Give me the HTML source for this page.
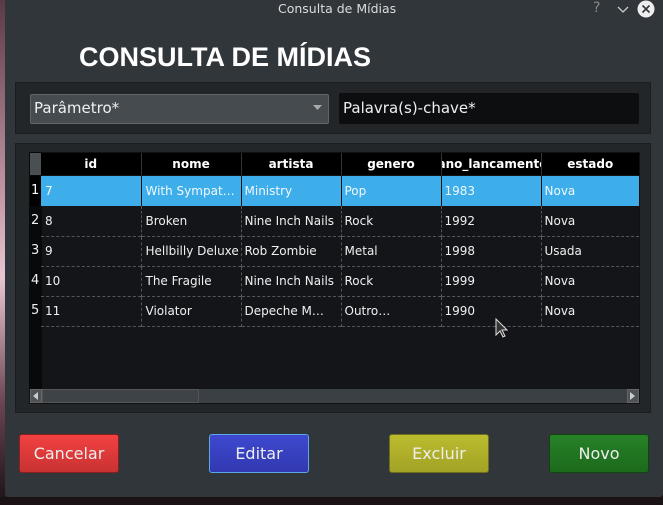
<!DOCTYPE html>
<html><head><meta charset="utf-8"><style>
*{margin:0;padding:0;box-sizing:border-box}
body{width:663px;height:505px;overflow:hidden;background:#1a1214;font-family:"DejaVu Sans","Liberation Sans",sans-serif;position:relative}
.abs{position:absolute}
#bgl{left:0;top:0;width:8px;height:505px;background:linear-gradient(#5a3a44,#c89aa8 40%,#e8c8d0 55%,#6a4450 80%,#1a1214)}
#win{left:5px;top:0;width:658px;height:497px;background:#31363b;border-radius:0 0 3px 3px}
.t{font-size:12px;color:#eff0f1;white-space:nowrap}
.grp{background:#232629;border:1px solid #1b1e20}
th,td{font-size:12px;height:30px;white-space:nowrap;overflow:hidden}
.btn{top:434px;width:100px;height:39px;border-radius:3px;color:#eee;font-size:16px;display:flex;align-items:center;justify-content:center}
</style></head><body>
<div id="bgl" class="abs"></div>
<div id="win" class="abs"></div>
<div class="abs" style="left:0;top:497px;width:663px;height:8px;background:#1a1214"></div>
<div class="abs t" style="left:278px;top:1px;font-size:12.5px;color:#dcdcdc">Consulta de Mídias</div>
<div class="abs" style="left:593px;top:0px;color:#888;font-size:14px">?</div>
<svg class="abs" style="left:617px;top:4px" width="12" height="10"><path d="M1 3l5 5 5-5" stroke="#ccc" fill="none" stroke-width="1.3"/></svg>
<svg class="abs" style="left:637px;top:0px" width="18" height="18"><circle cx="9" cy="9" r="8.5" fill="#eee"/><path d="M5.5 5.5l7 7M12.5 5.5l-7 7" stroke="#31363b" stroke-width="1.6"/></svg>
<div class="abs" style="left:79px;top:42px;font-size:27px;font-weight:bold;color:#fff;font-family:'Liberation Sans',sans-serif">CONSULTA DE MÍDIAS</div>
<div class="abs grp" style="left:15px;top:82px;width:636px;height:52px"></div>
<div class="abs" style="left:30px;top:94px;width:299px;height:30px;background:#464b50;border:1px solid #60656a;border-radius:2px"></div>
<div class="abs t" style="left:34px;top:99px;font-size:15px">Parâmetro*</div>
<svg class="abs" style="left:313px;top:105px" width="9" height="6"><path d="M0 0h9L4.5 5z" fill="#aaa"/></svg>
<div class="abs" style="left:339px;top:93px;width:300px;height:31px;background:#0d0e10;border-radius:2px"></div>
<div class="abs t" style="left:343px;top:99px;font-size:15px">Palavra(s)-chave*</div>
<div class="abs grp" style="left:15px;top:143px;width:636px;height:270px"></div>
<div class="abs" style="left:29px;top:152px;width:611px;height:252px;background:#141518;border:1px solid #111"></div>
<div class="abs" style="left:29px;top:152px;width:13px;height:237px;background:#08090a"></div>
<div class="abs" style="left:30px;top:153px;width:12px;height:22px;background:#4a4f54"></div>
<table class="abs" style="left:41px;top:153px;border-collapse:collapse;table-layout:fixed;width:598px">
<colgroup><col style="width:100px"><col style="width:100px"><col style="width:100px"><col style="width:100px"><col style="width:100px"><col style="width:98px"></colgroup>
<tr style="background:#000;color:#fff"><th style="height:22px;border-right:1px solid #333">id</th><th style="height:22px;border-right:1px solid #333">nome</th><th style="height:22px;border-right:1px solid #333">artista</th><th style="height:22px;border-right:1px solid #333">genero</th><th style="height:22px;border-right:1px solid #333;text-align:left;text-indent:-4px">ano_lancamento</th><th style="height:22px">estado</th></tr>
</table>
<div class="abs" style="left:30px;top:176px;width:11px">
<div class="t" style="height:30px;line-height:30px;font-size:13px;background:#000;color:#fff;padding-left:1px">1</div>
<div class="t" style="height:30px;line-height:30px;font-size:13px;padding-left:1px">2</div>
<div class="t" style="height:30px;line-height:30px;font-size:13px;padding-left:1px">3</div>
<div class="t" style="height:30px;line-height:30px;font-size:13px;padding-left:1px">4</div>
<div class="t" style="height:30px;line-height:30px;font-size:13px;padding-left:1px">5</div>
</div>
<table class="abs" style="left:41px;top:176px;border-collapse:collapse;table-layout:fixed;width:598px;color:#eff0f1">
<colgroup><col style="width:100px"><col style="width:100px"><col style="width:100px"><col style="width:100px"><col style="width:100px"><col style="width:98px"></colgroup>
<tr style="background:#3daee9;color:#f0f8ff"><td style="padding-left:4px;border-right:1px solid #111">7</td><td style="padding-left:4px;border-right:1px solid #111">With Sympat…</td><td style="padding-left:3px;border-right:1px solid #111">Ministry</td><td style="padding-left:3px;border-right:1px solid #111">Pop</td><td style="padding-left:3px;border-right:1px solid #111">1983</td><td style="padding-left:3px">Nova</td></tr>
<tr style="border-bottom:1px dashed #555"><td style="padding-left:4px;border-right:1px dashed #555">8</td><td style="padding-left:4px;border-right:1px dashed #555">Broken</td><td style="padding-left:3px;border-right:1px dashed #555">Nine Inch Nails</td><td style="padding-left:3px;border-right:1px dashed #555">Rock</td><td style="padding-left:3px;border-right:1px dashed #555">1992</td><td style="padding-left:3px">Nova</td></tr>
<tr style="border-bottom:1px dashed #555"><td style="padding-left:4px;border-right:1px dashed #555">9</td><td style="padding-left:4px;border-right:1px dashed #555">Hellbilly Deluxe</td><td style="padding-left:3px;border-right:1px dashed #555">Rob Zombie</td><td style="padding-left:3px;border-right:1px dashed #555">Metal</td><td style="padding-left:3px;border-right:1px dashed #555">1998</td><td style="padding-left:3px">Usada</td></tr>
<tr style="border-bottom:1px dashed #555"><td style="padding-left:4px;border-right:1px dashed #555">10</td><td style="padding-left:4px;border-right:1px dashed #555">The Fragile</td><td style="padding-left:3px;border-right:1px dashed #555">Nine Inch Nails</td><td style="padding-left:3px;border-right:1px dashed #555">Rock</td><td style="padding-left:3px;border-right:1px dashed #555">1999</td><td style="padding-left:3px">Nova</td></tr>
<tr style="border-bottom:1px dashed #555"><td style="padding-left:4px;border-right:1px dashed #555">11</td><td style="padding-left:4px;border-right:1px dashed #555">Violator</td><td style="padding-left:3px;border-right:1px dashed #555">Depeche M…</td><td style="padding-left:3px;border-right:1px dashed #555">Outro…</td><td style="padding-left:3px;border-right:1px dashed #555">1990</td><td style="padding-left:3px">Nova</td></tr>
</table>
<div class="abs" style="left:30px;top:389px;width:609px;height:14px;background:#3b4045"></div>
<div class="abs" style="left:30px;top:389px;width:12px;height:14px;background:#4d5257;border:1px solid #666"></div>
<svg class="abs" style="left:33px;top:392px" width="6" height="8"><path d="M5 0v8L0 4z" fill="#ccc"/></svg>
<div class="abs" style="left:42px;top:389px;width:157px;height:14px;background:#3e4348;border:1px solid #555"></div>
<div class="abs" style="left:627px;top:389px;width:12px;height:14px;background:#4d5257;border:1px solid #666"></div>
<svg class="abs" style="left:630px;top:392px" width="6" height="8"><path d="M0 0v8L5 4z" fill="#ccc"/></svg>
<svg class="abs" style="left:495px;top:318px" width="14" height="22"><path d="M1 1v16l4-4 3 6 2-1-3-6h5z" fill="#333" stroke="#ddd" stroke-width="1"/></svg>
<div class="abs btn" style="left:19px;background:linear-gradient(#f24141,#c93232);border:1px solid #8a1f1f">Cancelar</div>
<div class="abs btn" style="left:209px;background:linear-gradient(#3d49cf,#3238b0);border:1px solid #5aa8e8">Editar</div>
<div class="abs btn" style="left:389px;background:linear-gradient(#bcbc2f,#a2a226);border:1px solid #6f6f1c">Excluir</div>
<div class="abs btn" style="left:549px;background:linear-gradient(#278227,#1c6a1c);border:1px solid #124412">Novo</div>
</body></html>
